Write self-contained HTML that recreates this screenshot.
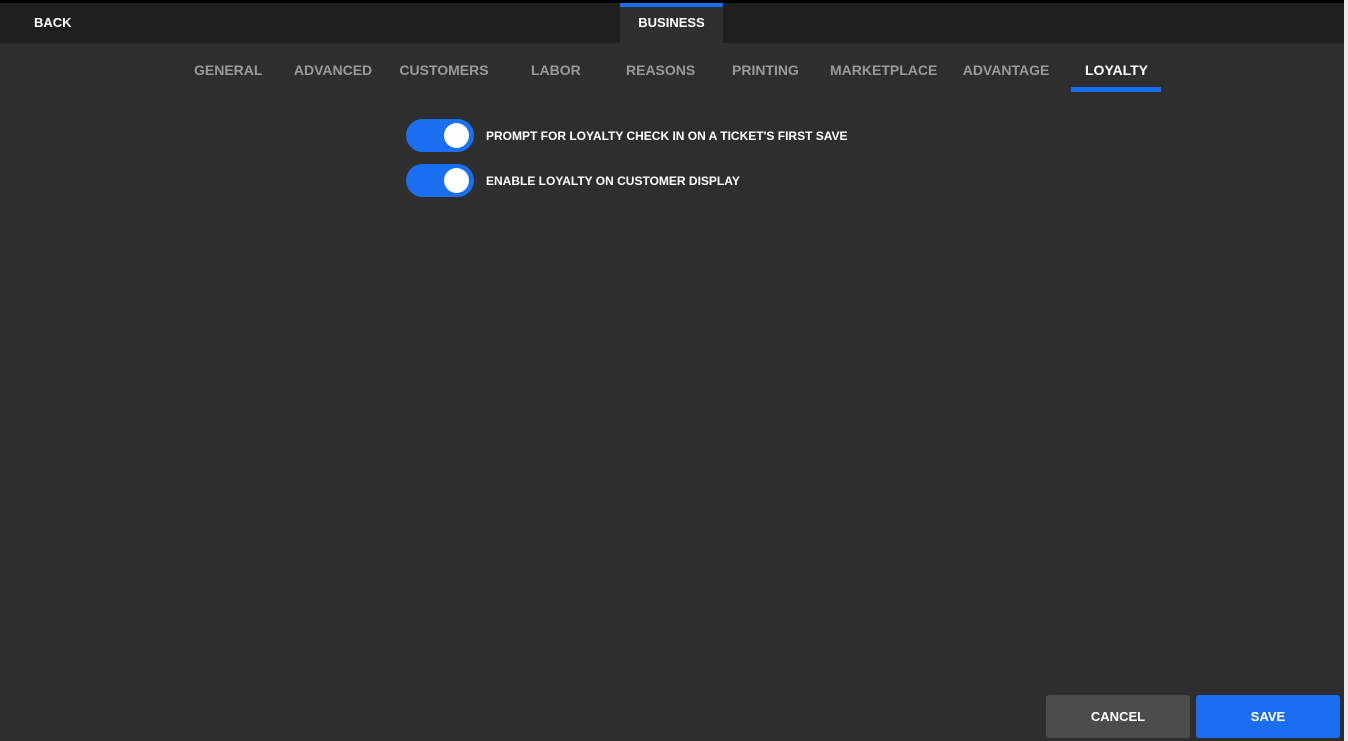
<!DOCTYPE html>
<html><head><style>
*{margin:0;padding:0;box-sizing:border-box}
body{width:1348px;height:741px;background:#2e2e2e;font-family:"Liberation Sans",Arial,sans-serif;font-weight:bold;position:relative;overflow:hidden}
.abs{position:absolute;white-space:nowrap}
.tab{position:absolute;top:62px;font-size:14px;color:#9a9a9a;text-align:center;line-height:16px}
.tg{position:absolute;left:406px;width:68px;height:33px;border-radius:17px;background:#1a6ff0}
.tg::after{content:"";position:absolute;right:5px;top:4px;width:25px;height:25px;border-radius:50%;background:#fff}
.lbl{position:absolute;left:486px;font-size:12px;color:#fff;line-height:14px}
</style></head><body>
<div class="abs" style="left:0;top:0;width:1348px;height:3px;background:#000"></div>
<div class="abs" style="left:0;top:3px;width:1344px;height:40px;background:#1f1f1f"></div>
<div class="abs" style="left:34px;top:15px;font-size:13px;color:#fff">BACK</div>
<div class="abs" style="left:620px;top:3px;width:103px;height:40px;background:#2e2e2e;border-top:4px solid #1a6ff0"></div>
<div class="abs" style="left:620px;top:15px;width:103px;text-align:center;font-size:13px;color:#fff">BUSINESS</div>
<div class="tab" style="left:194px;width:68px">GENERAL</div>
<div class="tab" style="left:293px;width:80px">ADVANCED</div>
<div class="tab" style="left:399px;width:90px">CUSTOMERS</div>
<div class="tab" style="left:531px;width:48px">LABOR</div>
<div class="tab" style="left:626px;width:69px">REASONS</div>
<div class="tab" style="left:731px;width:69px">PRINTING</div>
<div class="tab" style="left:830px;width:106px">MARKETPLACE</div>
<div class="tab" style="left:962px;width:88px">ADVANTAGE</div>
<div class="tab" style="left:1085px;width:62px;color:#fff">LOYALTY</div>
<div class="abs" style="left:1071px;top:87px;width:90px;height:5px;background:#1a6ff0"></div>
<div class="tg" style="top:119px"></div>
<div class="lbl" style="top:129px">PROMPT FOR LOYALTY CHECK IN ON A TICKET'S FIRST SAVE</div>
<div class="tg" style="top:164px"></div>
<div class="lbl" style="top:174px">ENABLE LOYALTY ON CUSTOMER DISPLAY</div>
<div class="abs" style="left:1046px;top:695px;width:144px;height:43px;background:#4c4c4c;border-radius:3px;color:#fff;font-size:13px;text-align:center;line-height:43px">CANCEL</div>
<div class="abs" style="left:1196px;top:695px;width:144px;height:43px;background:#1a6ff0;border-radius:3px;color:#fff;font-size:13px;text-align:center;line-height:43px">SAVE</div>
<div class="abs" style="left:1344px;top:0;width:4px;height:741px;background:#e8e8e8"></div>
</body></html>
